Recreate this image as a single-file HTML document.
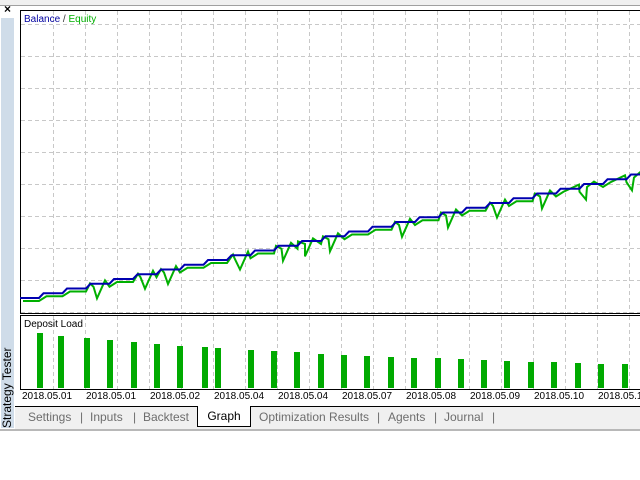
<!DOCTYPE html>
<html><head><meta charset="utf-8"><style>
*{margin:0;padding:0}
body{width:640px;height:480px;background:#fff;position:relative;overflow:hidden;font-family:"Liberation Sans",sans-serif}
.top{position:absolute;left:0;top:0;width:640px;height:5px;background:#f0f0f0;border-bottom:1px solid #a0a0a0}
.side{position:absolute;left:1px;top:18px;width:13px;height:410px;background:#cfdce9}
.x{position:absolute;left:4px;top:2px;font-size:12px;font-weight:bold}
.st{position:absolute;left:1px;top:428px;transform-origin:0 0;transform:rotate(-90deg);font-size:12px;width:110px;white-space:nowrap;line-height:13px;color:#000}
.tabs{position:absolute;left:15px;top:406px;width:625px;height:23px;background:#f0f0f0;border-top:1px solid #000}
.bot{position:absolute;left:0;top:429px;width:640px;height:2px;background:#b8b8b8}
.tab{position:absolute;top:3px;font-size:12px;color:#6d6d6d;white-space:nowrap}
.g{position:absolute;left:182px;top:-1px;width:52px;height:20px;background:#fff;border:1px solid #000;border-top:none;font-size:12px;text-align:center;line-height:20px}
</style></head><body>
<div class="top"></div>
<div class="x">×</div>
<div class="side"></div>
<div class="st">Strategy Tester</div>
<svg style="position:absolute;left:0;top:0" width="640" height="406" id="s">
<rect x="20.5" y="10.5" width="630" height="303" fill="#fff" stroke="#000"/>
<rect x="20.5" y="315.5" width="630" height="74" fill="#fff" stroke="#000"/>
<g id="grid" stroke="#c8c8c8" stroke-dasharray="4,3"></g>
<g id="bars" fill="#00aa00"></g>
<polyline id="eq" fill="none" stroke="#00b000" stroke-width="2"/>
<polyline id="bal" fill="none" stroke="#0000b0" stroke-width="2"/>
<text x="24" y="22" font-size="10" font-family="Liberation Sans" fill="#0000a0">Balance <tspan fill="#333">/</tspan> <tspan fill="#00b000">Equity</tspan></text>
<text x="24" y="327" font-size="10" font-family="Liberation Sans">Deposit Load</text>
<g id="dates" font-size="10" font-family="Liberation Sans"></g>
</svg>
<div class="tabs">
<span class="tab" style="left:13px">Settings</span><span class="tab" style="left:65px">|</span>
<span class="tab" style="left:75px">Inputs</span><span class="tab" style="left:118px">|</span>
<span class="tab" style="left:128px">Backtest</span>
<div class="g">Graph</div>
<span class="tab" style="left:244px">Optimization Results</span><span class="tab" style="left:362px">|</span>
<span class="tab" style="left:373px">Agents</span><span class="tab" style="left:419px">|</span>
<span class="tab" style="left:429px">Journal</span><span class="tab" style="left:477px">|</span>
</div>
<div class="bot"></div>
<script>
var ns="http://www.w3.org/2000/svg";
function el(p,t,a){var e=document.createElementNS(ns,t);for(var k in a)e.setAttribute(k,a[k]);document.getElementById(p).appendChild(e);return e;}
for(var x=53;x<640;x+=32){el("grid","line",{x1:x+.5,y1:11,x2:x+.5,y2:313});el("grid","line",{x1:x+.5,y1:316,x2:x+.5,y2:389});}
for(var y=24;y<313;y+=32)el("grid","line",{x1:21,y1:y+.5,x2:640,y2:y+.5});
var bx=[37,58,84,107,131,154,177,202,215,248,271,294,318,341,364,388,411,435,458,481,504,528,551,575,598,622];
var bt=[333,336,338,340,342,344,346,347,348,350,351,352,354,355,356,357,358,358,359,360,361,362,362,363,364,364];
for(var i=0;i<bx.length;i++)el("bars","rect",{x:bx[i],y:bt[i],width:6,height:388-bt[i]});
var d=["2018.05.01","2018.05.01","2018.05.02","2018.05.04","2018.05.04","2018.05.07","2018.05.08","2018.05.09","2018.05.10","2018.05.1"];
for(var i=0;i<d.length;i++){var t=el("dates","text",{x:22+64*i,y:399});t.textContent=d[i];}
var b=[],e=[],dips=[97,145,168,240,283,305,330,402,448,497,542,586,632];
for(var i=0;i<27;i++){var x0=20+23.5*i,y0=298-4.75*i;b.push([x0,y0],[x0+19,y0]);
e.push([x0+3,y0+3],[x0+19,y0+3]);}
document.getElementById("bal").setAttribute("points",b.map(p=>p.join(",")).join(" "));
var ep=[];e.forEach(p=>ep.push(p));
dips.forEach(function(dx){var by=298-4.75*((dx-20)/23.5);ep.push([dx-7,by+1],[dx,by+16],[dx+8,by-2]);});
ep.sort((a,b)=>a[0]-b[0]);
document.getElementById("eq").setAttribute("points",ep.map(p=>p.join(",")).join(" "));
</script>
</body></html>
